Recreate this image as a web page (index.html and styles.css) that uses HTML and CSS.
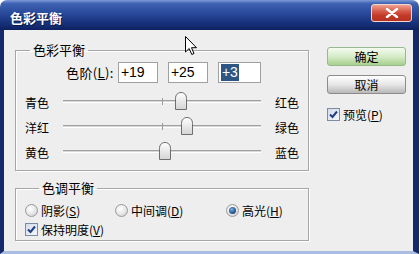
FILE: index.html
```html
<!DOCTYPE html>
<html lang="zh-CN">
<head>
<meta charset="utf-8">
<title>色彩平衡</title>
<link rel="stylesheet" href="styles.css">
</head>
<body>
<div class="window">
  <div class="titlebar">
    <span class="title">色彩平衡</span>
    <span class="close">
      <svg width="14" height="10" viewBox="0 0 14 10"><path d="M2 1 L12 9 M12 1 L2 9" stroke="#fff" stroke-width="2.4" stroke-linecap="round"/></svg>
    </span>
  </div>
  <div class="frame">
    <div class="main">
      <fieldset class="group group-color">
        <legend>色彩平衡</legend>
        <div class="levels">
          <span class="levels-label">色阶(<u>L</u>):</span>
          <span class="field w40">+19</span>
          <span class="field w40">+25</span>
          <span class="field w43"><span class="sel">+3</span></span>
        </div>
        <div class="slider-row">
          <span class="s-left">青色</span>
          <div class="track"><span class="tick"></span>
            <svg class="thumb" style="--v:19" width="12" height="18" viewBox="0 0 12 18"><defs><linearGradient id="tg" x1="0" y1="0" x2="0" y2="1"><stop offset="0" stop-color="#ffffff"/><stop offset="1" stop-color="#d4d4d4"/></linearGradient></defs><path d="M0.5 17.5 V6.5 C0.5 2.5 3 0.5 6 0.5 C9 0.5 11.5 2.5 11.5 6.5 V17.5 Z" fill="url(#tg)" stroke="#6e6e6e"/></svg>
          </div>
          <span class="s-right">红色</span>
        </div>
        <div class="slider-row">
          <span class="s-left">洋红</span>
          <div class="track"><span class="tick"></span>
            <svg class="thumb" style="--v:25" width="12" height="18" viewBox="0 0 12 18"><path d="M0.5 17.5 V6.5 C0.5 2.5 3 0.5 6 0.5 C9 0.5 11.5 2.5 11.5 6.5 V17.5 Z" fill="url(#tg)" stroke="#6e6e6e"/></svg>
          </div>
          <span class="s-right">绿色</span>
        </div>
        <div class="slider-row">
          <span class="s-left">黄色</span>
          <div class="track"><span class="tick"></span>
            <svg class="thumb" style="--v:3" width="12" height="18" viewBox="0 0 12 18"><path d="M0.5 17.5 V6.5 C0.5 2.5 3 0.5 6 0.5 C9 0.5 11.5 2.5 11.5 6.5 V17.5 Z" fill="url(#tg)" stroke="#6e6e6e"/></svg>
          </div>
          <span class="s-right">蓝色</span>
        </div>
      </fieldset>
      <fieldset class="group group-tone">
        <legend>色调平衡</legend>
        <div class="radios">
          <span class="opt opt1"><span class="radio"></span>阴影(<u>S</u>)</span>
          <span class="opt opt2"><span class="radio"></span>中间调(<u>D</u>)</span>
          <span class="opt"><span class="radio on"></span>高光(<u>H</u>)</span>
        </div>
        <div class="check-row">
          <span class="check"><svg width="11" height="11" viewBox="0 0 11 11"><path d="M2 5.5 L4.5 8 L9 2.5" fill="none" stroke="#1f3f86" stroke-width="2"/></svg></span>保持明度(<u>V</u>)
        </div>
      </fieldset>
    </div>
    <div class="side">
      <span class="btn btn-ok">确定</span>
      <span class="btn btn-cancel">取消</span>
      <div class="check-row preview">
        <span class="check"><svg width="11" height="11" viewBox="0 0 11 11"><path d="M2 5.5 L4.5 8 L9 2.5" fill="none" stroke="#1f3f86" stroke-width="2"/></svg></span>预览(<u>P</u>)
      </div>
    </div>
  </div>
  <svg class="cursor" width="13" height="20" viewBox="0 0 13 20"><path d="M0.5 0.5 L0.5 16 L4.2 12.5 L6.8 18.5 L9 17.5 L6.5 11.7 L11.5 11.7 Z" fill="#fff" stroke="#000" stroke-linejoin="round"/></svg>
</div>
</body>
</html>
```

FILE: styles.css
```css
* { box-sizing: border-box; }
html, body { margin: 0; padding: 0; background: #ffffff; }
body {
  font-family: "Noto Sans CJK SC", "Noto Sans", sans-serif;
  font-size: 12px;
  color: #000;
}
.window {
  position: relative;
  width: 419px;
  height: 254px;
  display: flex;
  flex-direction: column;
}
.titlebar {
  height: 30px;
  flex: none;
  display: flex;
  align-items: flex-start;
  justify-content: space-between;
  border-radius: 7px 7px 0 0;
  background: linear-gradient(180deg, #7d9ad6 0%, #3e62b2 12%, #2c4d9e 40%, #1a3580 72%, #0d2160 100%);
}
.title {
  margin: 10px 0 0 10px;
  font-size: 13px;
  line-height: 16px;
  font-weight: bold;
  color: #fff;
  text-shadow: 1px 1px 0 #0a1a48;
}
.close {
  width: 41px;
  height: 18px;
  margin: 4px 7px 0 0;
  border-radius: 3px;
  border: 1px solid #f3d8d0;
  background: linear-gradient(180deg, #f0a090 0%, #d65a48 40%, #c23a28 65%, #b4321f 100%);
  display: flex;
  align-items: center;
  justify-content: center;
}
.frame {
  flex: 1;
  display: flex;
  background: #eeeeee;
  border-left: 4px solid #14296c;
  border-right: 6px solid #14296c;
  border-bottom: 3px solid #a9bde2;
}
.main {
  width: 305px;
  padding: 13px 0 0 11px;
  flex: none;
}
.group {
  margin: 0;
  width: 294px;
  border: 1px solid #a6a6a6;
  box-shadow: inset 1px 1px 0 #fff, 1px 1px 0 #fff;
  padding: 0;
  min-width: 0;
}
.group legend {
  margin-left: 14px;
  padding: 0 3px;
  font-size: 13px;
  line-height: 14px;
  height: 14px;
}
.group-color { padding: 5px 0 5px 0; }
.group-tone { margin-top: 10px; padding: 7px 0 3px 9px; }

.levels {
  display: flex;
  align-items: center;
  height: 21px;
  margin-left: 50px;
}
.levels-label {
  font-size: 13px;
  letter-spacing: 0.4px;
  margin-right: 4px;
  line-height: 21px;
}
.field {
  height: 21px;
  background: #fff;
  border: 1px solid #a0a0a0;
  font-family: "Liberation Sans", Arial, sans-serif;
  font-size: 14px;
  line-height: 19px;
  padding-left: 2px;
  margin-right: 10px;
}
.w40 { width: 40px; }
.w43 { width: 43px; }
.sel {
  display: inline-block;
  background: #2e5683;
  color: #fff;
  line-height: 17px;
  padding: 0 1px;
}
.slider-row {
  display: flex;
  align-items: center;
  height: 25px;
  padding-left: 9px;
}
.levels + .slider-row { margin-top: 7px; }
.s-left { width: 38px; flex: none; }
.s-right { margin-left: 14px; }
.track {
  position: relative;
  width: 198px;
  height: 3px;
  border-top: 1px solid #a0a0a0;
  border-bottom: 1px solid #fff;
  background: #d8d8d8;
  margin-top: -2px;
}
.tick {
  position: absolute;
  left: 99px;
  top: -3px;
  width: 1px;
  height: 7px;
  background: #9a9a9a;
}
.thumb {
  position: absolute;
  top: -9px;
  left: calc(50% + var(--v) * 0.99px - 6px);
}
.radios {
  display: flex;
  align-items: center;
  height: 16px;
}
.opt { display: flex; align-items: center; font-size: 12px; }
.opt1 { width: 90px; }
.opt2 { width: 111px; }
.radio {
  width: 13px;
  height: 13px;
  border-radius: 50%;
  border: 1px solid #9a9a9a;
  background: radial-gradient(circle at 40% 35%, #ffffff 0%, #e8e8e8 50%, #c8c8c8 100%);
  margin-right: 3px;
  display: flex;
  align-items: center;
  justify-content: center;
}
.radio.on::after {
  content: "";
  width: 7px;
  height: 7px;
  border-radius: 50%;
  background: radial-gradient(circle at 40% 35%, #7ab0e0 0%, #2a5c96 55%, #163a66 100%);
}
.check-row {
  display: flex;
  align-items: center;
  height: 16px;
  margin-top: 3px;
}
.check {
  width: 13px;
  height: 13px;
  border: 1px solid #7d8ca4;
  background: linear-gradient(135deg, #d4dceb 0%, #f4f6fa 100%);
  margin-right: 3px;
  display: flex;
  align-items: center;
  justify-content: center;
}
.side {
  display: flex;
  flex-direction: column;
  padding-top: 17px;
  margin-left: 18px;
}
.btn {
  width: 79px;
  height: 19px;
  border-radius: 3px;
  display: flex;
  align-items: center;
  justify-content: center;
  font-size: 12px;
}
.btn-ok {
  border: 1px solid #98b890;
  background: linear-gradient(180deg, #f4faf0 0%, #d6ecc8 50%, #a9d08e 100%);
}
.btn-cancel {
  margin-top: 9px;
  border: 1px solid #8c8c8c;
  background: linear-gradient(180deg, #ffffff 0%, #e6e6e6 50%, #b8b8b8 100%);
}
.preview { margin-top: 12px; }
.cursor {
  position: absolute;
  left: 185px;
  top: 36px;
}
```
